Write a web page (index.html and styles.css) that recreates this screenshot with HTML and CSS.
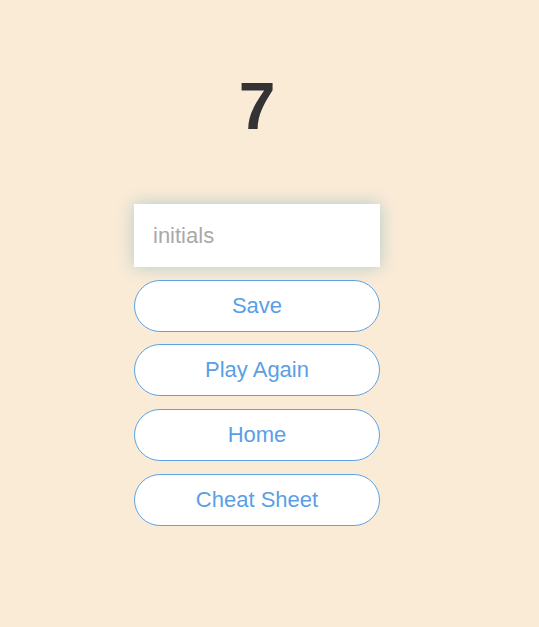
FILE: index.html
```html
<!DOCTYPE html>
<html>
<head>
<meta charset="utf-8">
<link rel="stylesheet" href="styles.css">
</head>
<body>
<main class="page">
  <h1 class="score">7</h1>
  <form class="panel">
    <input class="initials" type="text" placeholder="initials">
    <button class="btn" type="button">Save</button>
    <button class="btn" type="button">Play Again</button>
    <button class="btn" type="button">Home</button>
    <button class="btn" type="button">Cheat Sheet</button>
  </form>
</main>
</body>
</html>
```
FILE: styles.css
```css
html, body {
  margin: 0;
  padding: 0;
  background: #faebd7;
  font-family: "Liberation Sans", Arial, sans-serif;
  height: 100%;
}
.page {
  width: 514px;
  display: flex;
  flex-direction: column;
  align-items: center;
}
.score {
  margin: 68px 0 0 0;
  font-size: 66px;
  line-height: 76px;
  font-weight: bold;
  color: #333333;
}
.panel {
  margin-top: 60px;
  width: 246px;
  display: flex;
  flex-direction: column;
  gap: 12.67px;
}
.initials {
  box-sizing: border-box;
  width: 246px;
  height: 63px;
  border: none;
  outline: none;
  background: #ffffff;
  padding: 0 19px;
  font-family: "Liberation Sans", Arial, sans-serif;
  font-size: 22px;
  color: #333;
  box-shadow: 0 0 16px rgba(20, 125, 170, 0.3);
}
.initials::placeholder {
  color: #a9a9a9;
}
.btn {
  box-sizing: border-box;
  width: 246px;
  height: 52px;
  background: #ffffff;
  border: 1px solid #5ba4e6;
  border-radius: 26px;
  color: #5a9fe6;
  font-family: "Liberation Sans", Arial, sans-serif;
  font-size: 22px;
  padding: 0;
  cursor: pointer;
}
```
